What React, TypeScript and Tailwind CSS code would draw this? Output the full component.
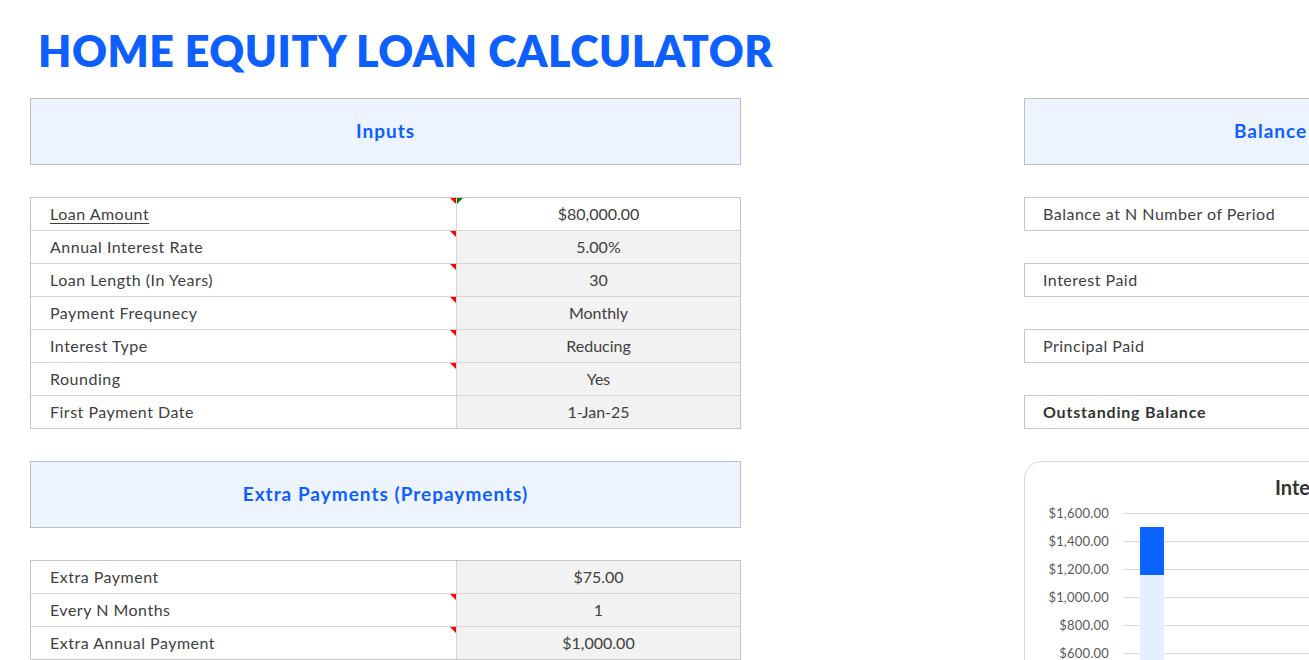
import React from "react";

const inputs: { label: string; value: string; marker?: boolean; white?: boolean; underline?: boolean; green?: boolean }[] = [
  { label: "Loan Amount", value: "$80,000.00", marker: true, white: true, underline: true, green: true },
  { label: "Annual Interest Rate", value: "5.00%", marker: true },
  { label: "Loan Length (In Years)", value: "30", marker: true },
  { label: "Payment Frequnecy", value: "Monthly", marker: true },
  { label: "Interest Type", value: "Reducing", marker: true },
  { label: "Rounding", value: "Yes", marker: true },
  { label: "First Payment Date", value: "1-Jan-25" },
];

const extras: { label: string; value: string; marker?: boolean; white?: boolean; underline?: boolean; green?: boolean }[] = [
  { label: "Extra Payment", value: "$75.00" },
  { label: "Every N Months", value: "1", marker: true },
  { label: "Extra Annual Payment", value: "$1,000.00", marker: true },
];

function RedMark() {
  return (
    <span className="absolute right-0 top-0 w-0 h-0 border-t-[6px] border-t-[#ff0000] border-l-[6px] border-l-transparent" />
  );
}

function GreenMark() {
  return (
    <span className="absolute left-0 top-0 w-0 h-0 border-t-[6px] border-t-[#008000] border-r-[6px] border-r-transparent" />
  );
}

function Table({ rows }: { rows: typeof inputs }) {
  return (
    <div className="border-l border-r border-b border-[#c6c6c6]">
      {rows.map((r, i) => (
        <div key={i} className={`flex h-[33px] border-t ${i === 0 ? "border-[#c6c6c6]" : "border-[#d4d4d4]"}`}>
          <div className="relative w-[426px] flex items-center pl-[19px] border-r border-[#d4d4d4] tracking-[0.5px]">
            <span className={r.underline ? "underline underline-offset-[3px] decoration-1" : ""}>{r.label}</span>
            {r.marker && <RedMark />}
          </div>
          <div className={`relative flex-1 flex items-center justify-center ${r.white ? "bg-white" : "bg-[#f2f2f2]"}`}>
            {r.value}
            {r.green && <GreenMark />}
          </div>
        </div>
      ))}
    </div>
  );
}

function Header({ text, extra = "" }: { text: string; extra?: string }) {
  return (
    <div
      className={`h-[67px] border border-[#bfbfbf] bg-[#edf4ff] flex items-center text-[19px] tracking-[1px] font-bold text-[#0d5fff] whitespace-nowrap overflow-hidden ${extra || "justify-center"}`}
    >
      {text}
    </div>
  );
}

const yLabels = ["$1,600.00", "$1,400.00", "$1,200.00", "$1,000.00", "$800.00", "$600.00"];

export default function App() {
  return (
    <div
      className="w-[1309px] h-[660px] overflow-hidden bg-white text-[#404040] text-[16px]"
      style={{ fontFamily: "Lato, 'Open Sans', sans-serif" }}
    >
      <h1 className="pt-[29px] pl-[38px] text-[43px] leading-[43px] font-extrabold text-[#0d5fff] tracking-[0.5px]">
        HOME EQUITY LOAN CALCULATOR
      </h1>
      <div className="flex mt-[26px] pl-[30px] gap-[283px]">
        <div className="w-[711px] shrink-0 flex flex-col gap-[32px]">
          <Header text="Inputs" />
          <Table rows={inputs} />
          <Header text="Extra Payments (Prepayments)" />
          <Table rows={extras} />
        </div>
        <div className="w-[600px] shrink-0 flex flex-col">
          <Header text="Balance Summary" extra="justify-start pl-[209px]" />
          <div className="flex flex-col gap-[32px] mt-[32px]">
            {["Balance at N Number of Period", "Interest Paid", "Principal Paid"].map((t) => (
              <div key={t} className="h-[34px] border border-[#c6c6c6] flex items-center pl-[18px] tracking-[0.5px]">
                {t}
              </div>
            ))}
            <div className="h-[34px] border border-[#c6c6c6] flex items-center pl-[18px] font-bold text-[#333] tracking-[0.8px]">
              Outstanding Balance
            </div>
            <div className="h-[240px] border border-[#d9d9d9] rounded-tl-[18px] pt-[12px] overflow-hidden">
              <div className="pl-[250px] text-[20px] font-bold text-[#333] leading-[26px] whitespace-nowrap">Interest vs Principal</div>
              <div className="flex mt-[13px]">
                <div className="w-[84px] flex flex-col items-end text-[13px] tracking-[0.2px] text-[#595959] -mt-[9px]">
                  {yLabels.map((l) => (
                    <div key={l} className="h-[28px] leading-[18px]">{l}</div>
                  ))}
                </div>
                <div className="relative ml-[14px] flex-1">
                  {yLabels.map((l) => (
                    <div key={l} className="h-[28px] border-t border-[#d9d9d9]" />
                  ))}
                  <div className="absolute left-[17px] top-[14px] w-[24px] flex flex-col">
                    <div className="h-[48px] bg-[#0d63ff]" />
                    <div className="h-[200px] bg-[#e6efff]" />
                  </div>
                </div>
              </div>
            </div>
          </div>
        </div>
      </div>
    </div>
  );
}
